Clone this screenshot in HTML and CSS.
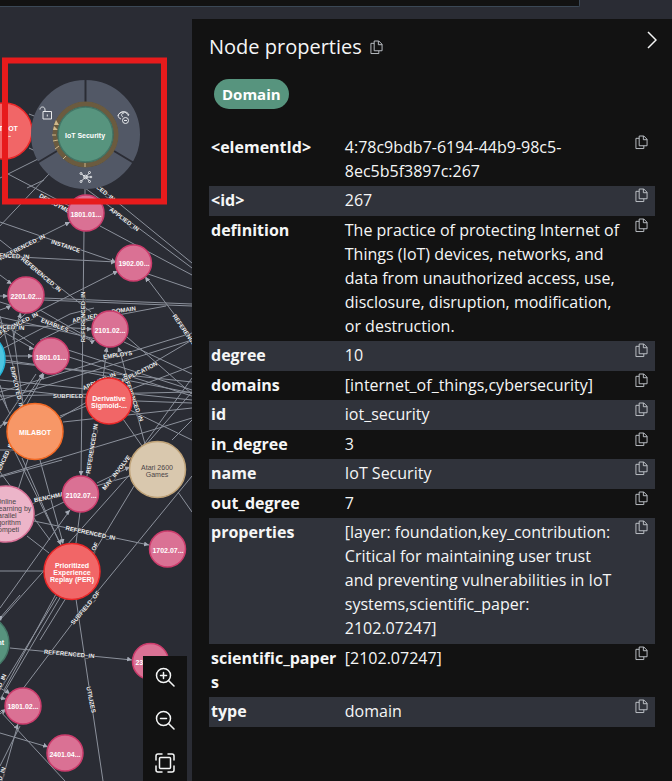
FILE: index.html
```html
<!DOCTYPE html>
<html lang="en">
<head>
<meta charset="utf-8">
<title>Node properties</title>
<link rel="stylesheet" href="styles.css">
</head>
<body>
<svg class="sprite" aria-hidden="true">
  <symbol id="copy" viewBox="0 0 14 16"><path d="M4.500 1h5l3.500 3.500v7h-8.500z M9 1v4h4 M4.500 3.500h-3.500v11h8.500v-3"/></symbol>
</svg>
<div class="query-bar"></div>
<main class="workspace">
  <section class="graph" aria-label="Graph">
    <svg class="canvas" viewBox="0 19 192 762" preserveAspectRatio="xMinYMin slice">
      <defs>
        <marker id="arrow" viewBox="0 0 6 6" refX="6" refY="3" markerWidth="5" markerHeight="5" markerUnits="userSpaceOnUse" orient="auto"><path d="M0 0L6 3L0 6z" fill="#a5abb6"/></marker>
      </defs>
      <g class="edges">
        <path d="M29 114L60 126M29 148L50 158M-2 179L8 174L50 153M8 174L100 222M49 174L-2 228M27 188L44 180"/>
        <path d="M85 188V196M85 188L192 268M105 192L192 263M100 226L192 275M148 274L192 289M84 231L81 476"/>
        <path d="M0 222L116 262M0 256L116 262M0 240L91 312M0 275L12 284M0 296L8 296M0 310L11 306"/>
        <path d="M0 257L70 222M37 312L118 271M190 335L146 277M43 298L192 304M43 300L192 306M0 302L26 310L90 340"/>
        <path d="M0 324L92 329M0 317L96 339M0 330L34 349M0 356L33 356M0 322L34 345M40 340L75 323L166 306"/>
        <path d="M0 338L40 300M13 340L20 313M0 316L22 400M40 310L94 341M0 350L70 314L94 308"/>
        <path d="M4 362L192 382M4 360L80 371L192 393M68 350L192 390M69 357L192 396M127 337L192 394M124 342L192 374"/>
        <path d="M0 392L192 333M0 400L192 340M0 388L110 400L192 403M0 396L192 392M0 380L192 400"/>
        <path d="M63 422L192 408M14 445L192 340M60 416L192 366M0 476L192 418M22 405L43 373M27 404L44 374M0 428L36 374"/>
        <path d="M103 378L107 348M130 410L192 440M119 348L145 444M123 419L142 446M192 378L140 450M192 392L145 446"/>
        <path d="M0 385L7 408M0 394L10 414M0 426L8 422M0 450L16 450M95 424L87 476M97 483L130 467M96 486L130 476"/>
        <path d="M15 452L61 545M22 458L60 544M40 460L63 543M28 459L18 490M0 472L50 540M0 477L62 460M12 324L23 404"/>
        <path d="M35 516L64 502M34 521L149 545M27 536L49 553M80 512L76 543M134 486L82 572L40 640M192 476L84 608L22 690"/>
        <path d="M178 492L192 512M192 420L172 440M0 571L44 571M0 608L70 510M0 620L141 462M56 594L4 690M61 596L2 696"/>
        <path d="M76 599L103 781M10 648L132 660M0 618L20 595M0 688L10 694M0 698L5 699M0 714L5 709M0 733L48 747"/>
        <path d="M0 711L65 781M2 781L18 724M0 766L20 726M0 690L57 597"/>
      </g>
      <g class="arrows">
        <path d="M64 225L70 222"/><path d="M110 260L116 262"/><path d="M110 262L116 262"/><path d="M112 274L118 271"/><path d="M149 282L145 277"/>
        <path d="M7 281L12 284"/><path d="M3 296L8 296"/><path d="M6 309L11 305"/><path d="M19 319L21 313"/><path d="M87 329L92 329"/><path d="M90 343L95 340"/>
        <path d="M29 348L34 349"/><path d="M28 356L33 356"/><path d="M40 378L43 373"/><path d="M41 379L44 374"/><path d="M106 352L107 347"/><path d="M120 352L118 347"/>
        <path d="M81 470L81 476"/><path d="M125 469L130 467"/><path d="M66 514L70 510"/><path d="M59 540L61 545"/><path d="M62 539L63 544"/><path d="M144 544L149 545"/>
        <path d="M127 659L132 660"/><path d="M5 690L10 694"/><path d="M1 698L6 699"/><path d="M1 713L6 709"/><path d="M43 745L48 747"/><path d="M16 729L18 724"/><path d="M0 616L1 621"/><path d="M3 424L8 422"/>
      </g>
      <g class="labels">
        <text transform="translate(57 207) rotate(29)">DEPLOYMENT</text>
        <text transform="translate(101 192) rotate(38)">ENCED_IN</text>
        <text transform="translate(123 221) rotate(37)">APPLIED_IN</text>
        <text transform="translate(65 248) rotate(18)">INSTANCE</text>
        <text transform="translate(23 249) rotate(-27)">REFERENCED_IN</text>
        <text transform="translate(12 258) rotate(3)">RENCED_IN</text>
        <text transform="translate(40 276) rotate(40)">REFERENCED_IN</text>
        <text transform="translate(90 319) rotate(-12)">APPLIED_IN</text>
        <text transform="translate(124 312) rotate(-8)">DOMAIN</text>
        <text transform="translate(54 327) rotate(21)">ENABLES</text>
        <text transform="translate(16 327) rotate(-27)">REFERENCED_IN</text>
        <text transform="translate(7 329) rotate(3)">RENCED_IN</text>
        <text transform="translate(85 317) rotate(-90)">REFERENCED_IN</text>
        <text transform="translate(184 333) rotate(55)">REFERENCED</text>
        <text transform="translate(118 357) rotate(-8)">EMPLOYS</text>
        <text transform="translate(140 374) rotate(-27)">APPLICATION</text>
        <text transform="translate(100 383) rotate(-24)">APPLIED_IN</text>
        <text transform="translate(68 398)">SUBFIELD</text>
        <text transform="translate(131 398) rotate(70)">REFERENCED_IN</text>
        <text transform="translate(15 388) rotate(77)">EMPLOYED_IN</text>
        <text transform="translate(94 449) rotate(-81)">REFERENCED_IN</text>
        <text transform="translate(118 474) rotate(-52)">MAY_INVOLVE</text>
        <text transform="translate(50 499) rotate(-12)">K_BENCHMARK</text>
        <text transform="translate(3 466) rotate(-65)">REFERENCED_IN</text>
        <text transform="translate(90 535) rotate(12)">REFERENCED_IN</text>
        <text transform="translate(96 549) rotate(-62)">_OF</text>
        <text transform="translate(87 609) rotate(-50)">SUBFIELD_OF</text>
        <text transform="translate(69 656) rotate(5)">REFERENCED_IN</text>
        <text transform="translate(89 700) rotate(78)">UTILIZES</text>
        <text transform="translate(-4 698) rotate(-65)">REFERENCED_IN</text>
        <text transform="translate(-2 792) rotate(-72)">REFERENCED_IN</text>
      </g>
      <g class="nodes">
        <g class="red"><circle cx="4" cy="131" r="28"/><text x="1" y="131">CHATBOT</text><text x="8" y="137">...</text></g>
        <g class="pink"><circle cx="86" cy="213" r="18"/><text x="86" y="217">1801.01...</text></g>
        <g class="pink"><circle cx="133.500" cy="263" r="18"/><text x="134" y="266">1902.00...</text></g>
        <g class="pink"><circle cx="26" cy="295" r="18"/><text x="26" y="299">2201.02...</text></g>
        <g class="pink"><circle cx="110" cy="329" r="18"/><text x="110" y="333">2101.02...</text></g>
        <g class="pink"><circle cx="51" cy="356" r="18"/><text x="51" y="360">1801.01...</text></g>
        <g class="cyan"><circle cx="-23" cy="359" r="28"/></g>
        <g class="red"><circle cx="109" cy="401" r="23"/><text x="109" y="401">Derivative</text><text x="109" y="408">Sigmoid-...</text></g>
        <g class="orange"><circle cx="35" cy="431.500" r="28"/><text x="35" y="435">MILABOT</text></g>
        <g class="sand"><circle cx="157.500" cy="469.500" r="28"/><text x="157" y="470">Atari 2600</text><text x="157" y="477">Games</text></g>
        <g class="pink"><circle cx="80.500" cy="494" r="18"/><text x="81" y="498">2102.07...</text></g>
        <g class="rose"><circle cx="6" cy="514" r="28"/><text x="6" y="504">Online</text><text x="13" y="511">Learning by</text><text x="5" y="518">Parallel</text><text x="6" y="525">Algorithm</text><text x="6" y="532">Competi</text></g>
        <g class="pink"><circle cx="167.500" cy="549" r="18"/><text x="168" y="553">1702.07...</text></g>
        <g class="red"><circle cx="72" cy="571.500" r="28"/><text x="72" y="568">Prioritized</text><text x="72" y="575">Experience</text><text x="72" y="582">Replay (PER)</text></g>
        <g class="green"><circle cx="-19" cy="643" r="28"/><text x="-16" y="645">Deployment</text></g>
        <g class="pink"><circle cx="150.500" cy="661.500" r="18"/><text x="151" y="665">2305.10...</text></g>
        <g class="pink"><circle cx="23" cy="706" r="18"/><text x="23" y="709">1801.02...</text></g>
        <g class="pink"><circle cx="65" cy="753" r="18"/><text x="65" y="757">2401.04...</text></g>
      </g>
      <g class="ring">
        <circle cx="85.500" cy="134.500" r="43.500" class="menu"/>
        <path class="gap" d="M85.500 79V102M57 151L37 163M114 151L134 163"/>
        <circle cx="85.500" cy="134.500" r="30.500" class="halo"/>
        <path class="ticks" d="M52 135h4M53 141l5-1M55 149l4-3M63 159l3-3M85 163v4"/>
        <path class="tip" d="M56 120l3 5h-5zM54 126l4 4h-5z"/>
        <g class="green"><circle cx="85.500" cy="134.500" r="27.500"/><text x="85" y="138">IoT Security</text></g>
        <g class="icon">
          <path d="M43 111.500h8.500v7.500h-8.500zM45 111v-1c0-2-1-3-2.500-3s-2.500 1-2.500 2.500M47.300 114.500v2"/>
          <path d="M121 119c-3-1-4-4-1-6c3-2 7-1 8.500 3M118 116c1-5 9-6 11-1M124 113c-3 0-3 3-1 4"/><circle cx="125.500" cy="120.500" r="3"/><path d="M124 120.500h3"/>
          <path d="M85.500 177l-4-3M85.500 177l4-4M85.500 177l-4 4M85.500 177l4 4M85.500 177h5"/><circle cx="85.500" cy="177" r="1.800"/><circle cx="81" cy="173.500" r="1"/><circle cx="89.500" cy="172.500" r="1"/><circle cx="81" cy="181.500" r="1"/><circle cx="89.500" cy="181.500" r="1"/><circle cx="91" cy="177" r=".8"/>
        </g>
      </g>
      <rect class="highlight" x="5" y="60.500" width="159" height="141"/>
    </svg>
    <div class="zoom">
      <button aria-label="Zoom in"><svg viewBox="0 0 20 20"><circle cx="8.500" cy="8.500" r="7"/><path d="M13.500 13.500l5.500 5.500M5.500 8.500h6M8.500 5.500v6"/></svg></button>
      <button aria-label="Zoom out"><svg viewBox="0 0 20 20"><circle cx="8.500" cy="8.500" r="7"/><path d="M13.500 13.500l5.500 5.500M5.500 8.500h6"/></svg></button>
      <button aria-label="Fit to screen"><svg viewBox="0 0 20 20"><rect x="4.500" y="4.500" width="11" height="11" rx="1"/><path d="M1 7V3q0-2 2-2h4M13 1h4q2 0 2 2v4M19 13v4q0 2-2 2h-4M7 19H3q-2 0-2-2v-4"/></svg></button>
    </div>
  </section>
  <aside class="panel">
    <header class="panel-head">
      <h1>Node properties</h1>
      <button class="copy" aria-label="Copy all"><svg><use href="#copy"/></svg></button>
      <button class="collapse" aria-label="Collapse panel"><svg viewBox="0 0 10 18"><path d="M1 1l8 8l-8 8"/></svg></button>
    </header>
    <button class="tag">Domain</button>
    <table class="properties">
      <tbody>
        <tr><th scope="row">&lt;elementId&gt;</th><td>4:78c9bdb7-6194-44b9-98c5-8ec5b5f3897c:267</td><td class="action"><button class="copy" aria-label="Copy elementId"><svg><use href="#copy"/></svg></button></td></tr>
        <tr><th scope="row">&lt;id&gt;</th><td>267</td><td class="action"><button class="copy" aria-label="Copy internal id"><svg><use href="#copy"/></svg></button></td></tr>
        <tr><th scope="row">definition</th><td>The practice of protecting Internet of Things (IoT) devices, networks, and data from unauthorized access, use, disclosure, disruption, modification, or destruction.</td><td class="action"><button class="copy" aria-label="Copy definition"><svg><use href="#copy"/></svg></button></td></tr>
        <tr><th scope="row">degree</th><td>10</td><td class="action"><button class="copy" aria-label="Copy degree"><svg><use href="#copy"/></svg></button></td></tr>
        <tr><th scope="row">domains</th><td>[internet_of_things,cybersecurity]</td><td class="action"><button class="copy" aria-label="Copy domains"><svg><use href="#copy"/></svg></button></td></tr>
        <tr><th scope="row">id</th><td>iot_security</td><td class="action"><button class="copy" aria-label="Copy id"><svg><use href="#copy"/></svg></button></td></tr>
        <tr><th scope="row">in_degree</th><td>3</td><td class="action"><button class="copy" aria-label="Copy in_degree"><svg><use href="#copy"/></svg></button></td></tr>
        <tr><th scope="row">name</th><td>IoT Security</td><td class="action"><button class="copy" aria-label="Copy name"><svg><use href="#copy"/></svg></button></td></tr>
        <tr><th scope="row">out_degree</th><td>7</td><td class="action"><button class="copy" aria-label="Copy out_degree"><svg><use href="#copy"/></svg></button></td></tr>
        <tr><th scope="row">properties</th><td>[layer: foundation,key_contribution: Critical for maintaining user trust and preventing vulnerabilities in IoT systems,scientific_paper: 2102.07247]</td><td class="action"><button class="copy" aria-label="Copy properties"><svg><use href="#copy"/></svg></button></td></tr>
        <tr><th scope="row">scientific_papers</th><td>[2102.07247]</td><td class="action"><button class="copy" aria-label="Copy scientific_papers"><svg><use href="#copy"/></svg></button></td></tr>
        <tr><th scope="row">type</th><td>domain</td><td class="action"><button class="copy" aria-label="Copy type"><svg><use href="#copy"/></svg></button></td></tr>
      </tbody>
    </table>
  </aside>
</main>
</body>
</html>
```
FILE: styles.css
```css
* { box-sizing: border-box; }
body {
  margin: 0;
  min-height: 100vh;
  display: flex;
  flex-direction: column;
  background: #2a2c34;
  color: #f5f6f6;
  font-family: "Open Sans", "Noto Sans", sans-serif;
  font-size: 16px;
  line-height: 24px;
}
button {
  margin: 0;
  padding: 0;
  border: 0;
  background: none;
  color: inherit;
  font: inherit;
  cursor: pointer;
}
svg { display: block; fill: none; }
.sprite { position: absolute; width: 0; height: 0; }

.query-bar {
  height: 7px;
  margin: 0 92px 12px 0;
  background: #121212;
  border: solid #3b4856;
  border-width: 0 1px 1px 0;
  border-radius: 0 0 2px 0;
}
.workspace { flex: 1; display: grid; grid-template-columns: 2fr 5fr; }

/* Graph */
.graph { position: relative; min-width: 0; overflow: hidden; }
.canvas { position: absolute; inset: 0; width: 100%; height: 100%; }
.edges { stroke: #a5abb6; stroke-width: 1; opacity: .8; }
.arrows path { marker-end: url(#arrow); }
.canvas text { font-family: "Liberation Sans", sans-serif; text-anchor: middle; }
.labels text {
  font-size: 6px;
  font-weight: bold;
  fill: #f0f0f0;
  stroke: #2a2c34;
  stroke-width: 1px;
  paint-order: stroke;
}
.nodes text, .ring text { font-size: 7px; font-weight: bold; fill: #fff; }
.nodes circle, .ring .green circle { stroke-width: 1.5; }
.pink circle { fill: #da7194; stroke: #cc3c6c; }
.red circle { fill: #f16667; stroke: #eb2728; }
.cyan circle { fill: #4dc5e0; stroke: #23b3d7; }
.orange circle { fill: #f79767; stroke: #f36924; }
.sand circle { fill: #d9c8ae; stroke: #c0a378; }
.rose circle { fill: #ecb5c9; stroke: #da7298; }
.green circle { fill: #57947e; stroke: #447666; }
.nodes .sand text, .nodes .rose text { fill: #4a4548; font-weight: normal; }
.menu { stroke: #525866; stroke-width: 22; }
.gap { stroke: #2a2c34; stroke-width: 2; }
.halo { stroke: #6b5b3f; stroke-width: 5; }
.ticks { stroke: #cfb98c; stroke-width: 1; }
.tip { fill: #cfb98c; }
.icon { stroke: #e6e8eb; stroke-width: 1; }
.highlight { stroke: #e71b1c; stroke-width: 6; }

.zoom {
  position: absolute;
  right: 5px;
  bottom: 0;
  width: 44px;
  height: 125px;
  padding-top: 11px;
  display: flex;
  flex-direction: column;
  gap: 23px;
  align-items: center;
  background: #121212;
}
.zoom svg { width: 20px; height: 20px; stroke: #f5f6f6; stroke-width: 1.5; stroke-linecap: round; }

/* Properties panel */
.panel { min-width: 0; padding: 12px 17px; background: #121212; }
.panel-head { display: flex; align-items: center; gap: 8px; height: 32px; }
h1 { margin: 0; font-size: 20px; font-weight: normal; }
.collapse { margin: 0 -2px 0 auto; align-self: flex-start; }
.collapse svg { width: 10px; height: 18px; stroke: #f5f6f6; stroke-width: 1.5; }
.copy svg { width: 13px; height: 15px; stroke: #c4c8cd; stroke-width: 1; }
.tag {
  display: block;
  height: 30px;
  margin: 16px 0 24px 5px;
  padding: 0 8px;
  border-radius: 15px;
  background: #57947e;
  color: #fff;
  font-size: 15px;
  font-weight: bold;
}
.properties { width: 100%; table-layout: fixed; border-collapse: collapse; }
.properties th, .properties td { padding: 2px 2px 3px; text-align: left; vertical-align: top; overflow-wrap: anywhere; }
.properties td { padding-right: 6px; }
.properties th { width: 30%; font-weight: bold; }
.properties tr:nth-child(even) { background: #30333b; }
.properties tr:nth-child(even) > * { padding-bottom: 4px; }
.properties .action { width: 28px; padding-left: 8px; line-height: 0; }
```
